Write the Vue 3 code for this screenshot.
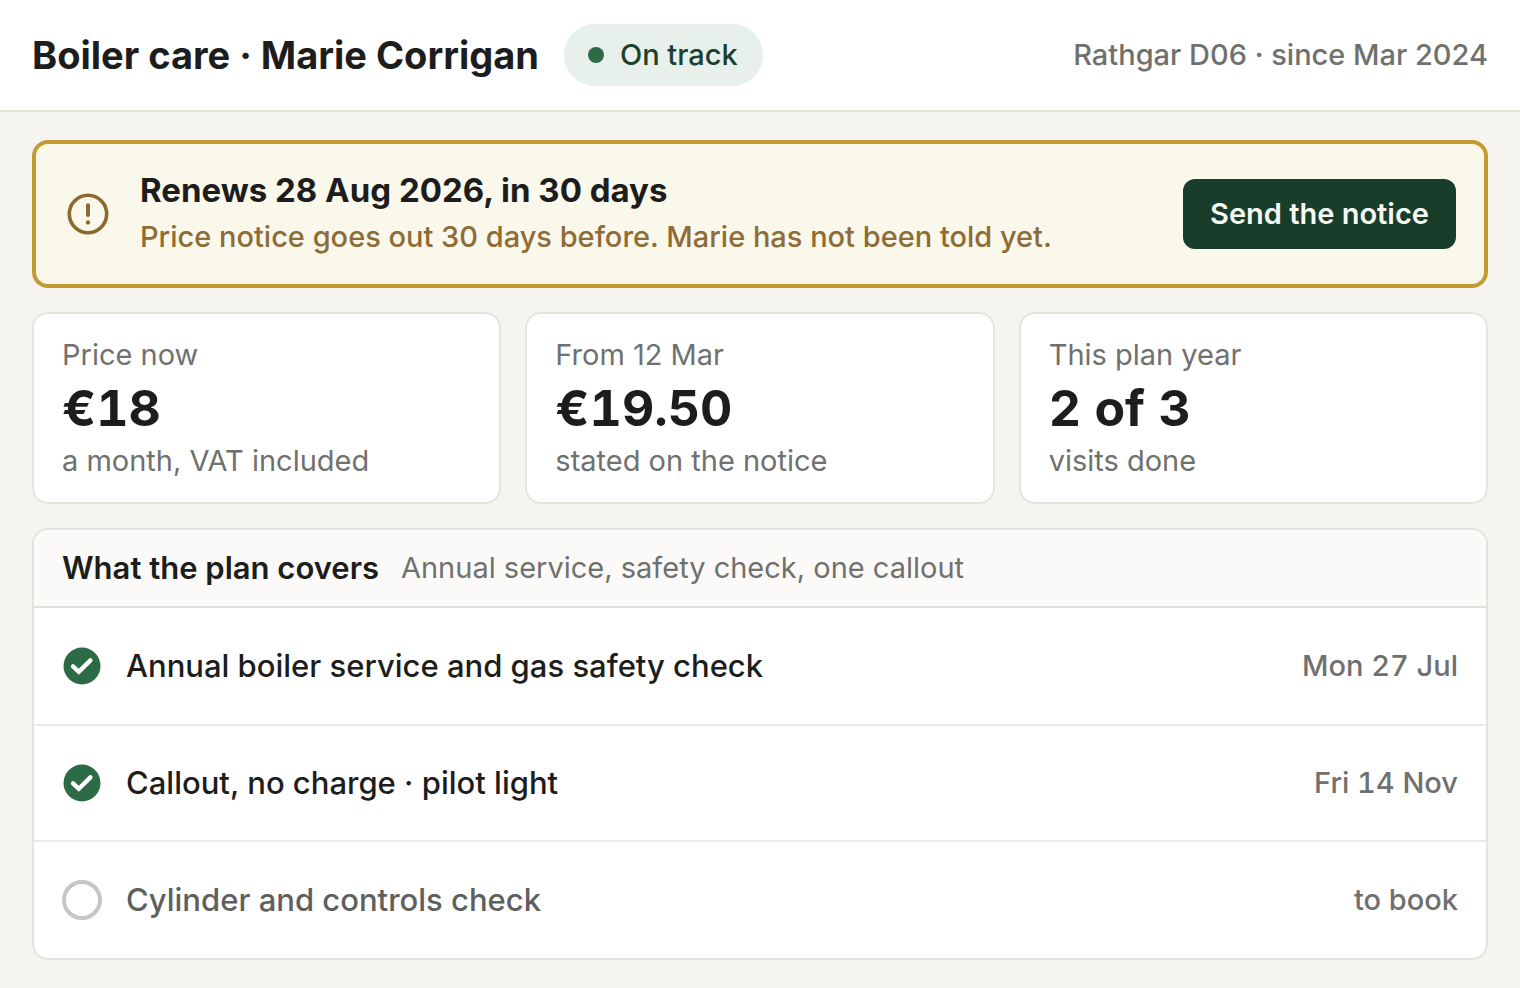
<script setup>
import { ref } from 'vue'

const stats = [
  { label: 'Price now', value: '€18', note: 'a month, VAT included' },
  { label: 'From 12 Mar', value: '€19.50', note: 'stated on the notice' },
  { label: 'This plan year', value: '2 of 3', note: 'visits done' },
]

const visits = ref([
  { name: 'Annual boiler service and gas safety check', when: 'Mon 27 Jul', done: true },
  { name: 'Callout, no charge · pilot light', when: 'Fri 14 Nov', done: true },
  { name: 'Cylinder and controls check', when: 'to book', done: false },
])
</script>

<template>
  <div class="page">
    <header class="top">
      <h1>Boiler care · Marie Corrigan</h1>
      <span class="pill"><i class="dot"></i>On track</span>
      <span class="since">Rathgar D06 · since Mar 2024</span>
    </header>

    <main class="content">
      <section class="notice">
        <svg class="notice-icon" viewBox="0 0 44 44" fill="none" aria-hidden="true">
          <circle cx="22" cy="22" r="18.7" stroke="currentColor" stroke-width="3.6" />
          <path d="M22 13.2v9.8" stroke="currentColor" stroke-width="4" stroke-linecap="round" />
          <circle cx="22" cy="30.4" r="2.2" fill="currentColor" />
        </svg>
        <div class="notice-text">
          <h2>Renews 28 Aug 2026, in 30 days</h2>
          <p>Price notice goes out 30 days before. Marie has not been told yet.</p>
        </div>
        <button type="button" class="send">Send the notice</button>
      </section>

      <section class="stats">
        <div v-for="s in stats" :key="s.label" class="stat">
          <span class="stat-label">{{ s.label }}</span>
          <strong class="stat-value">{{ s.value }}</strong>
          <span class="stat-label">{{ s.note }}</span>
        </div>
      </section>

      <section class="panel">
        <div class="panel-head">
          <h2>What the plan covers</h2>
          <p>Annual service, safety check, one callout</p>
        </div>
        <ul>
          <li v-for="v in visits" :key="v.name" :class="{ pending: !v.done }">
            <svg class="mark" viewBox="0 0 40 40" fill="none" aria-hidden="true">
              <template v-if="v.done">
                <circle cx="20" cy="20" r="18.5" fill="#2d6a46" />
                <path d="M11 20.4l5.8 5.4 11.6-11.4" stroke="#fff" stroke-width="4.4" stroke-linecap="round" stroke-linejoin="miter" />
              </template>
              <circle v-else cx="20" cy="20" r="18" stroke="#c6c6c3" stroke-width="4" />
            </svg>
            <span class="name">{{ v.name }}</span>
            <span class="when">{{ v.when }}</span>
          </li>
        </ul>
      </section>
    </main>
  </div>
</template>

<style>
body {
  margin: 0;
  background: #f5f4f0;
}
</style>

<style scoped>
.page {
  min-height: 100vh;
  font-family: Inter, "Liberation Sans", sans-serif;
  font-size: 29px;
  line-height: 46px;
  color: #1c1d1c;
  background: #f5f4f0;
}

h1,
h2,
p,
ul {
  margin: 0;
  padding: 0;
}

.top {
  display: flex;
  align-items: center;
  gap: 25px;
  padding: 24px 32px;
  background: #fff;
  border-bottom: 2px solid #e5e4dd;
}

h1 {
  font-size: 38px;
  font-weight: 700;
}

.pill {
  display: flex;
  align-items: center;
  gap: 16px;
  padding: 8px 25px 8px 24px;
  border-radius: 31px;
  background: #e8f0eb;
  color: #1a4030;
  font-weight: 500;
}

.dot {
  width: 16px;
  height: 16px;
  border-radius: 50%;
  background: #2d6a46;
}

.since {
  margin-left: auto;
  color: #70716e;
  font-weight: 450;
}

.content {
  display: flex;
  flex-direction: column;
  gap: 24px;
  padding: 28px 32px;
}

.notice {
  display: flex;
  align-items: center;
  gap: 30px;
  padding: 22px 28px 22px 30px;
  border: 4px solid #c49a33;
  border-radius: 16px;
  background: #faf7eb;
}

.notice-icon {
  flex: none;
  width: 44px;
  height: 44px;
  color: #8a6a2f;
}

.notice-text {
  flex: 1;
  padding-bottom: 2px;
}

.notice h2 {
  font-size: 33px;
  line-height: 48px;
  font-weight: 650;
}

.notice p {
  color: #8e6c35;
  font-weight: 450;
}

.send {
  padding: 12px 27px;
  border: 0;
  border-radius: 12px;
  background: #183d2b;
  color: #f6f8f4;
  font: inherit;
  font-weight: 600;
  cursor: pointer;
}

.stats {
  display: grid;
  grid-template-columns: repeat(3, 1fr);
  gap: 24px;
}

.stat {
  display: flex;
  flex-direction: column;
  padding: 18px 28px;
  border: 2px solid #e5e4dd;
  border-radius: 16px;
  background: #fff;
}

.stat-label {
  color: #70716e;
}

.stat-value {
  font-size: 50px;
  line-height: 60px;
  font-weight: 700;
  font-variant-numeric: tabular-nums;
}

.panel {
  overflow: hidden;
  border: 2px solid #e3e2dc;
  border-radius: 16px;
  background: #fff;
}

.panel-head {
  display: flex;
  align-items: center;
  gap: 22px;
  padding: 15px 28px;
  border-bottom: 2px solid #e1e0dc;
  background: #fbfaf8;
}

.panel-head h2 {
  font-size: 31px;
  font-weight: 600;
}

.panel-head p {
  color: #70716e;
}

li {
  display: flex;
  align-items: center;
  gap: 24px;
  box-sizing: border-box;
  min-height: 116px;
  padding: 16px 28px;
  font-size: 31px;
  font-weight: 450;
}

li + li {
  border-top: 2px solid #ebebe8;
}

li:last-child {
  min-height: 118px;
}

.mark {
  flex: none;
  width: 40px;
  height: 40px;
}

.name {
  flex: 1;
}

.pending .name {
  color: #5e605d;
}

.when {
  font-size: 29px;
  color: #70716e;
  font-variant-numeric: tabular-nums;
}
</style>
